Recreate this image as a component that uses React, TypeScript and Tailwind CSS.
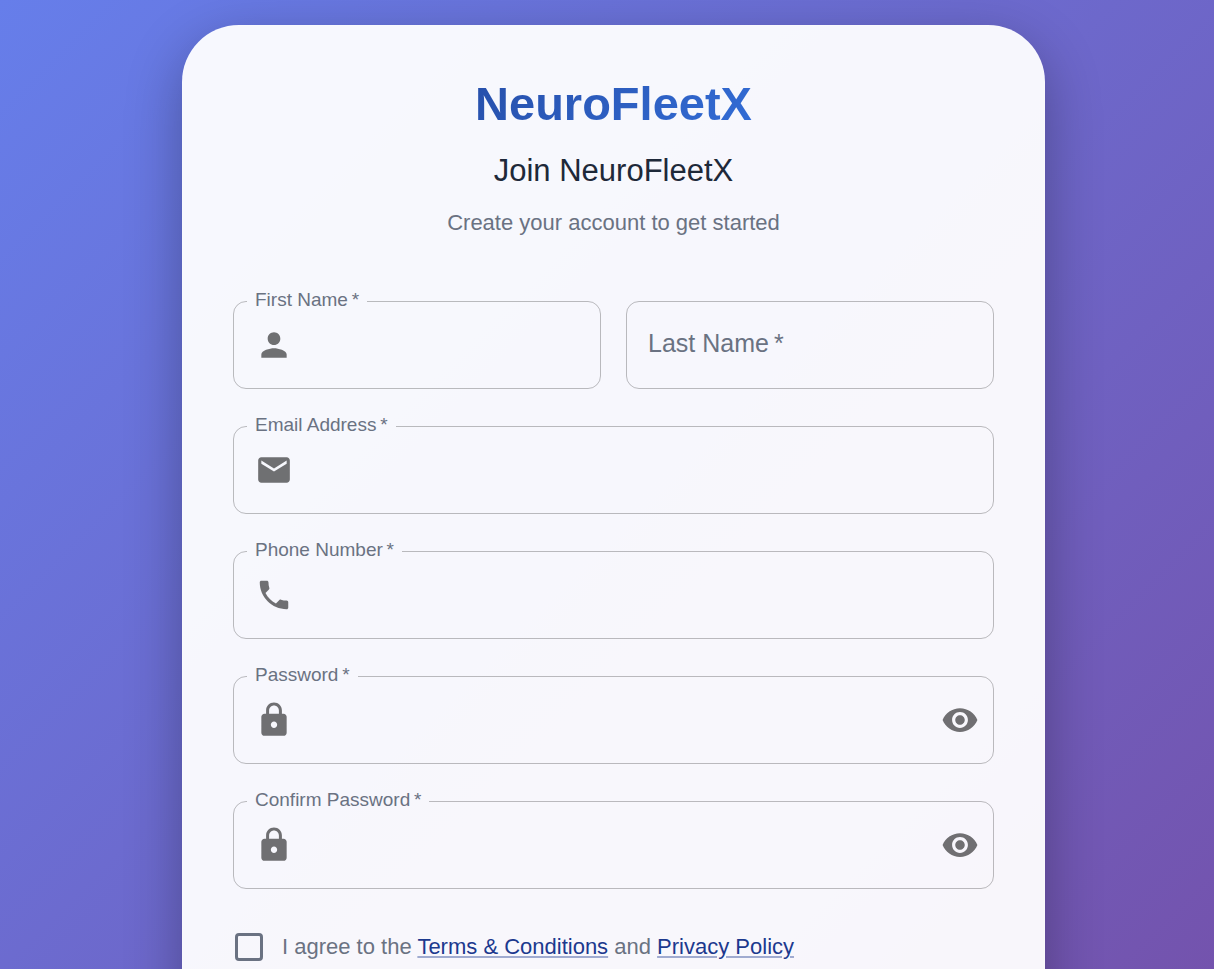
import { useState } from "react";
import type { ReactNode } from "react";
import type { IconType } from "react-icons";
import { MdEmail, MdLock, MdPerson, MdPhone, MdVisibility, MdVisibilityOff } from "react-icons/md";

const THIN_SPACE = "\u2009";

type FieldProps = {
  id: string;
  label: string;
  type?: string;
  icon: IconType;
  action?: ReactNode;
};

/* Outlined field whose label sits in a notch of the top border. */
function OutlinedField({ id, label, type = "text", icon: Icon, action }: FieldProps) {
  return (
    <fieldset className="min-w-0 rounded-[13px] border border-black/25 pr-[14px] pl-[21px]">
      <legend className="-ml-2 px-2 pb-0.5 text-[19px] leading-[18px] text-gray-500">
        <label htmlFor={id}>
          {label}
          {THIN_SPACE}*
        </label>
      </legend>
      <div className="flex h-[77px] items-center gap-3 pb-[9px]">
        <Icon className="size-[38px] shrink-0 text-black/55" aria-hidden="true" />
        <input
          id={id}
          type={type}
          required
          className="h-14 min-w-0 flex-1 bg-transparent text-[25px] text-gray-800 outline-none"
        />
        {action}
      </div>
    </fieldset>
  );
}

function PasswordField({ id, label }: { id: string; label: string }) {
  const [visible, setVisible] = useState(false);
  const Eye = visible ? MdVisibilityOff : MdVisibility;
  return (
    <OutlinedField
      id={id}
      label={label}
      type={visible ? "text" : "password"}
      icon={MdLock}
      action={
        <button
          type="button"
          aria-label="Toggle password visibility"
          onClick={() => setVisible(!visible)}
          className="shrink-0 rounded-full text-black/55"
        >
          <Eye className="size-[38px]" />
        </button>
      }
    />
  );
}

/* Outlined field without an icon: the label rests inside until there is text. */
function RestingField({ id, label }: { id: string; label: string }) {
  return (
    <div className="relative h-22 rounded-[13px] border border-black/25">
      <input
        id={id}
        type="text"
        required
        placeholder=" "
        className="peer h-full w-full bg-transparent px-[21px] text-[25px] text-gray-800 outline-none"
      />
      <label
        htmlFor={id}
        className="pointer-events-none absolute inset-y-0 left-[21px] flex items-center pb-0.5 text-[25px] text-gray-500 peer-focus:hidden peer-[:not(:placeholder-shown)]:hidden"
      >
        {label}
        {THIN_SPACE}*
      </label>
    </div>
  );
}

const linkClass = "text-blue-900 underline decoration-blue-900/40 decoration-2 underline-offset-2";

export default function App() {
  return (
    <main className="flex min-h-screen justify-center bg-linear-[135deg,#667eea_0%,#764ba2_100%] py-[25px] pl-[13px] font-['Liberation_Sans',Arial,sans-serif]">
      <section className="w-full max-w-[863px] rounded-[57px] border border-white/20 bg-white/95 px-[50px] pt-[50px] pb-96 shadow-[0_18px_56px_rgba(0,0,0,0.3)]">
        <header className="text-center">
          <h1 className="bg-linear-[135deg,#1e3a8a_0%,#3b82f6_100%] bg-clip-text text-[47px] leading-14 font-bold text-transparent">
            NeuroFleetX
          </h1>
          <h2 className="mt-3.5 text-[31px] leading-[50px] text-gray-800">Join NeuroFleetX</h2>
          <p className="mt-[11px] text-[22px] leading-8 text-gray-500">Create your account to get started</p>
        </header>

        <form className="mt-[52px] flex flex-col gap-[27px]" onSubmit={(e) => e.preventDefault()}>
          <div className="grid grid-cols-2 items-end gap-[25px]">
            <OutlinedField id="first-name" label="First Name" icon={MdPerson} />
            <RestingField id="last-name" label="Last Name" />
          </div>
          <OutlinedField id="email" label="Email Address" type="email" icon={MdEmail} />
          <OutlinedField id="phone" label="Phone Number" type="tel" icon={MdPhone} />
          <PasswordField id="password" label="Password" />
          <PasswordField id="confirm-password" label="Confirm Password" />

          <div className="mt-[15px] flex items-center gap-[19px] pl-0.5">
            <input
              id="terms"
              type="checkbox"
              className="size-7 shrink-0 appearance-none rounded-[4px] border-3 border-gray-500 checked:bg-blue-900"
            />
            <label htmlFor="terms" className="text-[22px] leading-8 text-gray-500">
              I agree to the{" "}
              <a href="#terms" className={linkClass}>
                Terms &amp; Conditions
              </a>{" "}
              and{" "}
              <a href="#privacy" className={linkClass}>
                Privacy Policy
              </a>
            </label>
          </div>
        </form>
      </section>
    </main>
  );
}
